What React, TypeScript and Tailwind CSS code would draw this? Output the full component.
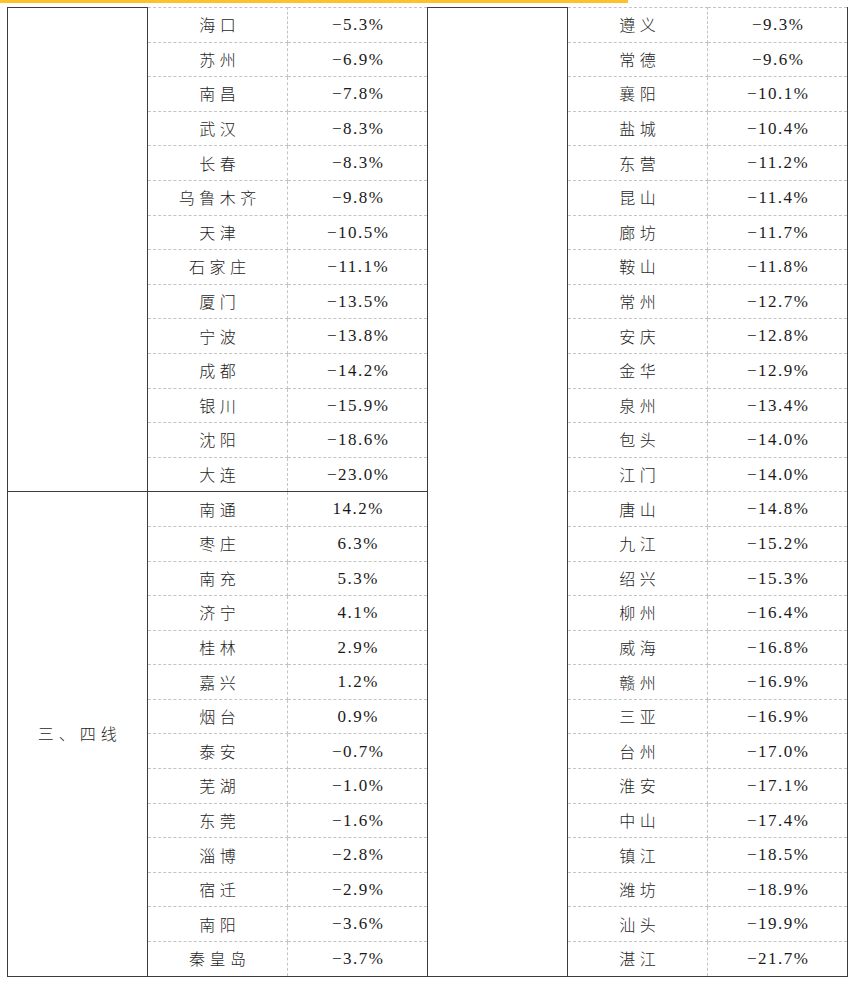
import React from "react";

type Row = [string, string];

const group1: Row[] = [
  ["海口", "−5.3%"],
  ["苏州", "−6.9%"],
  ["南昌", "−7.8%"],
  ["武汉", "−8.3%"],
  ["长春", "−8.3%"],
  ["乌鲁木齐", "−9.8%"],
  ["天津", "−10.5%"],
  ["石家庄", "−11.1%"],
  ["厦门", "−13.5%"],
  ["宁波", "−13.8%"],
  ["成都", "−14.2%"],
  ["银川", "−15.9%"],
  ["沈阳", "−18.6%"],
  ["大连", "−23.0%"],
];

const group2: Row[] = [
  ["南通", "14.2%"],
  ["枣庄", "6.3%"],
  ["南充", "5.3%"],
  ["济宁", "4.1%"],
  ["桂林", "2.9%"],
  ["嘉兴", "1.2%"],
  ["烟台", "0.9%"],
  ["泰安", "−0.7%"],
  ["芜湖", "−1.0%"],
  ["东莞", "−1.6%"],
  ["淄博", "−2.8%"],
  ["宿迁", "−2.9%"],
  ["南阳", "−3.6%"],
  ["秦皇岛", "−3.7%"],
];

const right: Row[] = [
  ["遵义", "−9.3%"],
  ["常德", "−9.6%"],
  ["襄阳", "−10.1%"],
  ["盐城", "−10.4%"],
  ["东营", "−11.2%"],
  ["昆山", "−11.4%"],
  ["廊坊", "−11.7%"],
  ["鞍山", "−11.8%"],
  ["常州", "−12.7%"],
  ["安庆", "−12.8%"],
  ["金华", "−12.9%"],
  ["泉州", "−13.4%"],
  ["包头", "−14.0%"],
  ["江门", "−14.0%"],
  ["唐山", "−14.8%"],
  ["九江", "−15.2%"],
  ["绍兴", "−15.3%"],
  ["柳州", "−16.4%"],
  ["威海", "−16.8%"],
  ["赣州", "−16.9%"],
  ["三亚", "−16.9%"],
  ["台州", "−17.0%"],
  ["淮安", "−17.1%"],
  ["中山", "−17.4%"],
  ["镇江", "−18.5%"],
  ["潍坊", "−18.9%"],
  ["汕头", "−19.9%"],
  ["湛江", "−21.7%"],
];

const left = [...group1, ...group2];

const inner =
  "border border-dashed border-[#c4c4c4] p-0 text-center align-middle";
const merged =
  "border border-solid border-[#3c3c3c] p-0 text-center align-middle";
const cityCls =
  "text-[16px] tracking-[4.5px] pl-[4.5px] text-[#1e1e1e] [font-family:'Noto_Sans_CJK_SC',sans-serif] font-light";
const numCls =
  "text-[17px] tracking-[1.5px] pl-[1.5px] text-[#1a1a1a] [font-family:'Liberation_Serif',serif]";
const solidBottom = "[border-bottom-style:solid] border-b-[#3c3c3c]";
const solidRight = "[border-right-style:solid] border-r-[#3c3c3c]";

export default function App() {
  return (
    <div className="w-[856px] h-[987px] bg-white">
      <div className="h-[3px] w-[628px] bg-[#fdc12e]" />
      <table className="ml-[7px] mt-[4px] border-collapse table-fixed w-[841px]">
        <colgroup>
          <col className="w-[140px]" />
          <col className="w-[140px]" />
          <col className="w-[140px]" />
          <col className="w-[140px]" />
          <col className="w-[140px]" />
          <col className="w-[140px]" />
        </colgroup>
        <tbody>
          {left.map((l, i) => {
            const r = right[i];
            const lastRow = i === 27;
            const groupEnd = i === 13;
            const lb = lastRow || groupEnd ? solidBottom : "";
            const rb = lastRow ? solidBottom : "";
            return (
              <tr key={i} className="h-[34.6px]">
                {i === 0 && <td rowSpan={14} className={merged}></td>}
                {i === 14 && (
                  <td rowSpan={14} className={merged}>
                    <span className={cityCls + " tracking-[5px]"}>三、四线</span>
                  </td>
                )}
                <td className={`${inner} ${lb}`}>
                  <span className={cityCls}>{l[0]}</span>
                </td>
                <td className={`${inner} ${lb} ${solidRight}`}>
                  <span className={numCls}>{l[1]}</span>
                </td>
                {i === 0 && <td rowSpan={28} className={merged}></td>}
                <td className={`${inner} ${rb}`}>
                  <span className={cityCls}>{r[0]}</span>
                </td>
                <td className={`${inner} ${rb} ${solidRight}`}>
                  <span className={numCls}>{r[1]}</span>
                </td>
              </tr>
            );
          })}
        </tbody>
      </table>
    </div>
  );
}
